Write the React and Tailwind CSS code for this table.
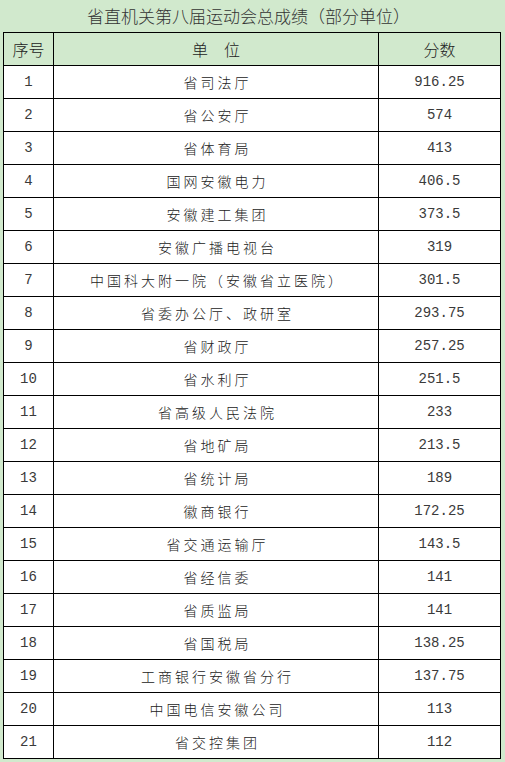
import React from "react";

const rows = [
  ["1", "省司法厅", "916.25"],
  ["2", "省公安厅", "574"],
  ["3", "省体育局", "413"],
  ["4", "国网安徽电力", "406.5"],
  ["5", "安徽建工集团", "373.5"],
  ["6", "安徽广播电视台", "319"],
  ["7", "中国科大附一院（安徽省立医院）", "301.5"],
  ["8", "省委办公厅、政研室", "293.75"],
  ["9", "省财政厅", "257.25"],
  ["10", "省水利厅", "251.5"],
  ["11", "省高级人民法院", "233"],
  ["12", "省地矿局", "213.5"],
  ["13", "省统计局", "189"],
  ["14", "徽商银行", "172.25"],
  ["15", "省交通运输厅", "143.5"],
  ["16", "省经信委", "141"],
  ["17", "省质监局", "141"],
  ["18", "省国税局", "138.25"],
  ["19", "工商银行安徽省分行", "137.75"],
  ["20", "中国电信安徽公司", "113"],
  ["21", "省交控集团", "112"],
];

const cjk = "font-['Noto_Sans_CJK_SC',sans-serif]";
const mono = "font-['Liberation_Mono','Noto_Sans_CJK_SC',monospace]";

export default function App() {
  return (
    <div className="w-[505px] h-[762px] bg-[#d1e9cd] flex flex-col">
      <div
        className={`h-[32px] flex items-center justify-center pl-[2px] pr-[10px] text-[17px] font-light text-[#333] ${cjk}`}
      >
        省直机关第八届运动会总成绩（部分单位）
      </div>
      <div className="pl-[3px]">
        <div className="w-[498px] grid grid-cols-[49px_324px_121px] gap-px bg-black p-px">
          <div className={`h-[32px] bg-[#d1e9cd] flex items-center justify-center text-[16px] font-light text-[#222] ${cjk}`}>
            序号
          </div>
          <div className={`h-[32px] bg-[#d1e9cd] flex items-center justify-center text-[16px] font-light text-[#222] ${cjk}`}>
            单　位
          </div>
          <div className={`h-[32px] bg-[#d1e9cd] flex items-center justify-center text-[16px] font-light text-[#222] ${cjk}`}>
            分数
          </div>
          {rows.map(([n, name, score]) => (
            <React.Fragment key={n}>
              <div className={`h-[32px] bg-white flex items-center justify-center text-[14px] text-[#3a3a3a] ${mono}`}>
                {n}
              </div>
              <div className={`h-[32px] bg-white flex items-center justify-center pl-[3px] text-[14px] font-light tracking-[3px] text-[#222] ${cjk}`}>
                {name}
              </div>
              <div className={`h-[32px] bg-white flex items-center justify-center text-[14px] text-[#3a3a3a] ${mono}`}>
                {score}
              </div>
            </React.Fragment>
          ))}
        </div>
      </div>
    </div>
  );
}
